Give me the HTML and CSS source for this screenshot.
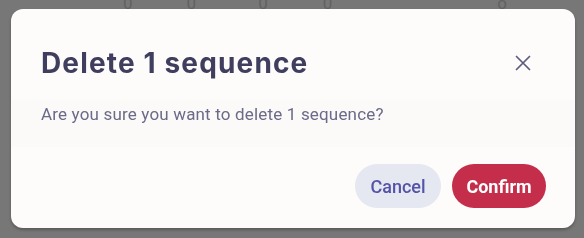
FILE: index.html
```html
<!DOCTYPE html>
<html>
<head>
<meta charset="utf-8">
<link rel="stylesheet" href="styles.css">
</head>
<body>
<div class="page">
  <div class="stats">
    <span class="stat s1">0</span>
    <span class="stat s2">0</span>
    <span class="stat s3">0</span>
    <span class="stat s4">0</span>
    <span class="stat s5">o</span>
  </div>
</div>
<div class="overlay">
  <div class="modal" role="dialog">
    <div class="modal-header">
      <h2 class="modal-title">Delete 1 sequence</h2>
      <button class="close-btn" aria-label="Close">
        <svg width="16" height="16" viewBox="0 0 16 16"><path d="M1.5 1.5 L14.5 14.5 M14.5 1.5 L1.5 14.5" stroke="#5d5c7b" stroke-width="1.7" stroke-linecap="round" fill="none"/></svg>
      </button>
    </div>
    <div class="modal-body">
      <p class="modal-text">Are you sure you want to delete 1 sequence?</p>
    </div>
    <div class="modal-footer">
      <button class="btn btn-cancel">Cancel</button>
      <button class="btn btn-confirm">Confirm</button>
    </div>
  </div>
</div>
</body>
</html>
```
FILE: styles.css
```css
* { box-sizing: border-box; }
html, body { margin: 0; padding: 0; }
body {
  width: 584px;
  height: 238px;
  overflow: hidden;
  background: #777777;
  font-family: Roboto, "Liberation Sans", sans-serif;
}
.page { height: 238px; }
.stats {
  display: flex;
  height: 12px;
  line-height: 12px;
  overflow: hidden;
}
.stat {
  font-size: 17px;
  color: #626262;
  transform: translateY(-3px);
}
.s1 { margin-left: 123px; }
.s2 { margin-left: 54px; }
.s3 { margin-left: 62px; }
.s4 { margin-left: 55px; }
.s5 { margin-left: 165px; }
.overlay {
  position: fixed;
  inset: 0;
  display: flex;
  padding: 9px 9px 10px 11px;
}
.modal {
  flex: 1;
  background: #fdfcfb;
  border-radius: 12px;
  box-shadow: 0 2px 3px rgba(0,0,0,0.25);
  display: flex;
  flex-direction: column;
}
.modal-header {
  display: flex;
  align-items: center;
  justify-content: space-between;
  padding: 36px 40px 19px 30px;
}
.modal-title {
  margin: 0;
  font-family: Inter, "Noto Sans", sans-serif;
  font-weight: 700;
  font-size: 28px;
  line-height: 36px;
  color: #403e5f;
  letter-spacing: 1.15px;
}
.close-btn {
  width: 24px;
  height: 24px;
  border: 0;
  padding: 0;
  background: transparent;
  display: flex;
  align-items: center;
  justify-content: center;
}
.modal-body {
  padding: 2px 30px 21px;
  background: #fbfaf8;
}
.modal-text {
  margin: 0;
  font-size: 17px;
  line-height: 24px;
  color: #6b6a88;
  letter-spacing: 0.17px;
}
.modal-footer {
  display: flex;
  justify-content: flex-end;
  gap: 11px;
  padding: 17px 29px 20px 0;
}
.btn {
  height: 44px;
  border: 0;
  border-radius: 22px;
  font-family: Roboto, "Liberation Sans", sans-serif;
  font-size: 18px;
  padding: 0;
}
.btn-cancel {
  width: 86px;
  background: #e5e7f1;
  color: #5453a7;
  font-weight: 500;
}
.btn-confirm {
  width: 94px;
  background: #c52e4b;
  color: #ffffff;
  font-weight: 700;
}
```
